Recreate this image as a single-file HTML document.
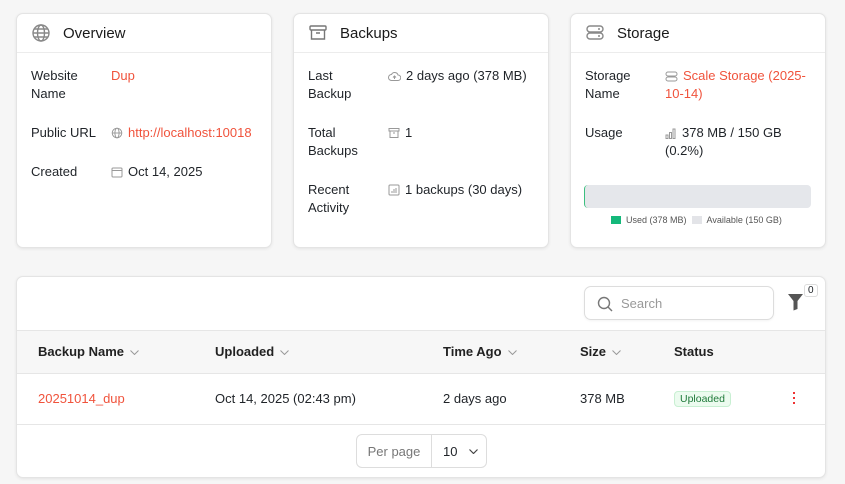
<!DOCTYPE html>
<html><head><meta charset="utf-8"><style>
*{box-sizing:border-box;margin:0;padding:0}
body{width:845px;height:484px;background:#f6f6f6;font-family:"Liberation Sans",sans-serif;color:#1f2328;position:relative;overflow:hidden;font-size:13px}
.card{position:absolute;background:#fff;border:1px solid #e4e4e4;border-radius:7px;box-shadow:0 1px 3px rgba(0,0,0,.08)}
.hd{height:39px;border-bottom:1px solid #ececec;display:flex;align-items:center;padding-left:14px;font-size:15px;font-weight:500;color:#1a1a1a}
.hd svg{margin-right:12px}
.a{position:absolute;line-height:18px}
.red{color:#f0533c}
.ic{display:inline-block;vertical-align:-2px;margin-right:5px}
.th{position:absolute;top:67px;font-weight:600;font-size:13px;color:#222}
.chev{display:inline-block;margin-left:6px;vertical-align:1px}
</style></head><body>

<div class="card" style="left:16px;top:13px;width:256px;height:235px">
<div class="hd"><svg width="20" height="20" viewBox="0 0 20 20" fill="none" stroke="#888" stroke-width="1.4"><circle cx="10" cy="10" r="8"/><ellipse cx="10" cy="10" rx="3.5" ry="8"/><path d="M2 10h16M3.5 6h13M3.5 14h13"/></svg>Overview</div>
<div class="a" style="left:14px;top:53px">Website<br>Name</div>
<div class="a red" style="left:94px;top:53px">Dup</div>
<div class="a" style="left:14px;top:110px">Public URL</div>
<div class="a red" style="left:94px;top:110px"><svg class="ic" width="12" height="12" viewBox="0 0 20 20" fill="none" stroke="#999" stroke-width="1.6"><circle cx="10" cy="10" r="8"/><ellipse cx="10" cy="10" rx="3.5" ry="8"/><path d="M2 10h16"/></svg>http://localhost:10018</div>
<div class="a" style="left:14px;top:149px">Created</div>
<div class="a" style="left:94px;top:149px"><svg class="ic" width="12" height="12" viewBox="0 0 12 12" fill="none" stroke="#999"><rect x="1" y="2" width="10" height="9" rx="1"/><path d="M1 4.5h10"/></svg>Oct 14, 2025</div>
</div>

<div class="card" style="left:293px;top:13px;width:256px;height:235px">
<div class="hd"><svg width="20" height="20" viewBox="0 0 20 20" fill="none" stroke="#777" stroke-width="1.4"><rect x="2" y="3" width="16" height="4" rx="1"/><path d="M3.5 7v9h13V7M8 10h4"/></svg>Backups</div>
<div class="a" style="left:14px;top:53px">Last<br>Backup</div>
<div class="a" style="left:94px;top:53px"><svg class="ic" width="13" height="12" viewBox="0 0 13 12" fill="none" stroke="#999"><path d="M3.5 10.5a3 3 0 0 1 0-6 3.5 3.5 0 0 1 6.5 0.5 2.5 2.5 0 0 1 0 5.5z"/><path d="M6.5 9V6M5 7.5l1.5-1.5 1.5 1.5"/></svg>2 days ago (378 MB)</div>
<div class="a" style="left:14px;top:110px">Total<br>Backups</div>
<div class="a" style="left:94px;top:110px"><svg class="ic" width="12" height="12" viewBox="0 0 12 12" fill="none" stroke="#999"><rect x="1" y="1.5" width="10" height="2.5"/><path d="M2 4v6.5h8V4M5 6h2"/></svg>1</div>
<div class="a" style="left:14px;top:167px">Recent<br>Activity</div>
<div class="a" style="left:94px;top:167px"><svg class="ic" width="12" height="12" viewBox="0 0 12 12" fill="none" stroke="#999"><rect x="1" y="1" width="10" height="10" rx="1"/><path d="M4 9V7M6 9V5M8 9V4"/></svg>1 backups (30 days)</div>
</div>

<div class="card" style="left:570px;top:13px;width:256px;height:235px">
<div class="hd"><svg width="20" height="20" viewBox="0 0 20 20" fill="none" stroke="#888" stroke-width="1.4"><rect x="2" y="3" width="16" height="6" rx="3"/><rect x="2" y="10" width="16" height="6" rx="3"/><path d="M13 6h2M13 13h2"/></svg>Storage</div>
<div class="a" style="left:14px;top:53px">Storage<br>Name</div>
<div class="a red" style="left:94px;top:53px;width:150px"><svg class="ic" width="13" height="11" viewBox="0 0 13 11" fill="none" stroke="#999"><rect x="1" y="1" width="11" height="4" rx="2"/><rect x="1" y="6" width="11" height="4" rx="2"/></svg>Scale Storage (2025-10-14)</div>
<div class="a" style="left:14px;top:110px">Usage</div>
<div class="a" style="left:94px;top:110px;width:150px"><svg class="ic" width="12" height="11" viewBox="0 0 12 11" fill="none" stroke="#999"><rect x="1" y="7" width="2" height="3.5"/><rect x="4.5" y="4.5" width="2" height="6"/><rect x="8" y="1" width="2" height="9.5"/></svg>378 MB / 150 GB (0.2%)</div>
<div style="position:absolute;left:13px;top:171px;width:227px;height:23px;background:#e5e7eb;border-radius:4px;border-left:1px solid #3bbf7f"></div>
<div style="position:absolute;left:40px;top:201px;font-size:9px;color:#555;display:flex;align-items:center"><span style="width:10px;height:8px;background:#14b87a;margin-right:5px"></span>Used (378 MB)<span style="width:10px;height:8px;background:#e3e4e8;margin:0 5px 0 5px"></span>Available (150 GB)</div>
</div>

<div class="card" style="left:16px;top:276px;width:810px;height:202px;overflow:hidden">
<div style="position:absolute;left:567px;top:9px;width:190px;height:34px;border:1px solid #ddd;border-radius:7px;box-shadow:0 1px 2px rgba(0,0,0,.05)">
<svg style="position:absolute;left:12px;top:9px" width="16" height="16" viewBox="0 0 16 16" fill="none" stroke="#777" stroke-width="1.4"><circle cx="7" cy="7" r="5.5"/><path d="M11 11l4 4"/></svg>
<span style="position:absolute;left:36px;top:9px;color:#999;font-size:13px">Search</span></div>
<svg style="position:absolute;left:770px;top:16px" width="17" height="18" viewBox="0 0 17 18"><path d="M1 1h15l-5.5 7v8l-4 1.5V8z" fill="#555"/></svg>
<div style="position:absolute;left:787px;top:7px;font-size:10px;border:1px solid #ddd;border-radius:3px;padding:0 3px;background:#fff">0</div>
<div style="position:absolute;left:0;top:53px;width:810px;height:44px;background:#f7f7f7;border-top:1px solid #e6e6e6;border-bottom:1px solid #e6e6e6"></div>
<div class="th" style="left:21px">Backup Name<svg class="chev" width="9" height="5" viewBox="0 0 9 5" fill="none" stroke="#999"><path d="M.5.5l4 4 4-4"/></svg></div>
<div class="th" style="left:198px">Uploaded<svg class="chev" width="9" height="5" viewBox="0 0 9 5" fill="none" stroke="#999"><path d="M.5.5l4 4 4-4"/></svg></div>
<div class="th" style="left:426px">Time Ago<svg class="chev" width="9" height="5" viewBox="0 0 9 5" fill="none" stroke="#999"><path d="M.5.5l4 4 4-4"/></svg></div>
<div class="th" style="left:563px">Size<svg class="chev" width="9" height="5" viewBox="0 0 9 5" fill="none" stroke="#999"><path d="M.5.5l4 4 4-4"/></svg></div>
<div class="th" style="left:657px">Status</div>
<div style="position:absolute;left:0;top:147px;width:810px;border-top:1px solid #e6e6e6"></div>
<div class="a red" style="left:21px;top:113px">20251014_dup</div>
<div class="a" style="left:198px;top:113px">Oct 14, 2025 (02:43 pm)</div>
<div class="a" style="left:426px;top:113px">2 days ago</div>
<div class="a" style="left:563px;top:113px">378 MB</div>
<div style="position:absolute;left:657px;top:114px;padding:1px 5px;font-size:10.5px;color:#1f7a3a;background:#ecfbef;border:1px solid #c8efd2;border-radius:4px">Uploaded</div>
<div style="position:absolute;left:776px;top:115px;width:2px;font-size:0">
<div style="width:2px;height:2px;background:#e33;margin-bottom:3px"></div><div style="width:2px;height:2px;background:#e33;margin-bottom:3px"></div><div style="width:2px;height:2px;background:#e33"></div></div>
<div style="position:absolute;left:339px;top:157px;width:131px;height:34px;border:1px solid #ddd;border-radius:6px;display:flex;align-items:center;font-size:13px">
<span style="width:75px;border-right:1px solid #ddd;height:100%;display:flex;align-items:center;justify-content:center;color:#777">Per page</span>
<span style="padding-left:11px">10</span><svg style="margin-left:12px" width="9" height="5" viewBox="0 0 9 5" fill="none" stroke="#444" stroke-width="1.2"><path d="M.5.5l4 4 4-4"/></svg></div>
</div>
</body></html>
